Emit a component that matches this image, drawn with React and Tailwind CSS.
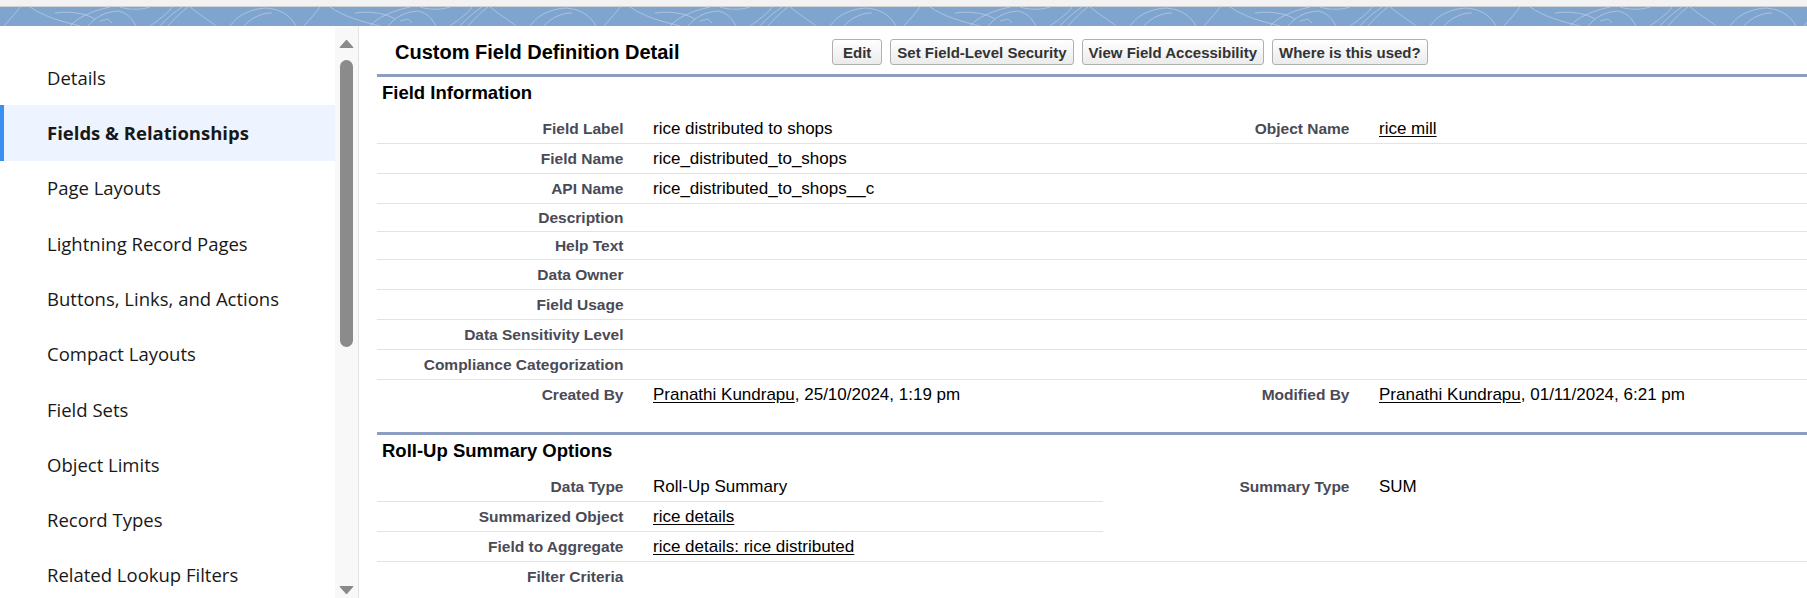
import React from "react";

const navItems = [
  "Details",
  "Fields & Relationships",
  "Page Layouts",
  "Lightning Record Pages",
  "Buttons, Links, and Actions",
  "Compact Layouts",
  "Field Sets",
  "Object Limits",
  "Record Types",
  "Related Lookup Filters",
];

function TopBand() {
  return (
    <div className="flex flex-col">
      <div className="h-[7px] bg-[#f2f2f2] border-b border-[#d2d2d2]" />
      <div className="h-[19px] bg-[#7fa5cf] overflow-hidden">
        <svg width="100%" height="19" xmlns="http://www.w3.org/2000/svg">
          <defs>
            <pattern id="topo" x="0" y="0" width="300" height="19" patternUnits="userSpaceOnUse">
              <g fill="none" stroke="#ffffff" strokeOpacity="0.32" strokeWidth="1">
                <path d="M30 0 C45 10, 60 14, 80 19" />
                <path d="M55 6 C70 4, 85 6, 95 12" />
                <path d="M70 19 C78 10, 92 4, 110 0" />
                <path d="M88 19 C96 10, 104 5, 118 4 C128 6, 132 12, 136 19" />
                <path d="M100 14 L108 12 L112 16" />
                <path d="M150 19 C160 12, 168 6, 172 0" />
                <path d="M160 19 C168 10, 176 4, 182 0" />
                <path d="M168 19 C174 12, 180 6, 188 0" />
                <path d="M190 0 C200 8, 210 14, 216 19" />
                <path d="M230 19 C238 8, 250 2, 266 1 C280 2, 290 8, 296 19" />
                <path d="M244 19 C252 10, 262 6, 272 6" />
                <path d="M4 19 C10 12, 16 6, 20 0" />
                <path d="M120 0 C130 3, 140 3, 150 0" />
              </g>
            </pattern>
          </defs>
          <rect width="100%" height="19" fill="url(#topo)" />
        </svg>
      </div>
    </div>
  );
}

function Sidebar() {
  return (
    <div className="w-[335px] bg-white pt-[24px] shrink-0">
      {navItems.map((item) => {
        const active = item === "Fields & Relationships";
        return (
          <div
            key={item}
            className={
              active
                ? "h-[55.3px] flex items-center pl-[43px] bg-[#eef4ff] border-l-4 border-[#3b8ff0]"
                : "h-[55.3px] flex items-center pl-[47px]"
            }
          >
            <span
              className={
                active
                  ? "text-[18.5px] font-bold text-[#181818]"
                  : "text-[18.5px] text-[#181818]"
              }
              style={{ fontFamily: '"Open Sans", "Noto Sans", sans-serif' }}
            >
              {item}
            </span>
          </div>
        );
      })}
    </div>
  );
}

function ScrollColumn() {
  return (
    <div className="w-[24px] shrink-0 bg-[#f8f8f8] border-r border-[#e2e2e2] flex flex-col items-center pt-[13px] pb-[3px]">
      <svg width="15" height="9" viewBox="0 0 15 9">
        <path d="M7.5 1 L14 8.5 L1 8.5 Z" fill="#8a8a8a" stroke="#8a8a8a" strokeLinejoin="round" />
      </svg>
      <div className="mt-[12px] w-[13px] h-[287px] rounded-full bg-[#8b8b8b]" />
      <div className="flex-1" />
      <svg width="15" height="9" viewBox="0 0 15 9">
        <path d="M1 0.5 L14 0.5 L7.5 8 Z" fill="#8a8a8a" stroke="#8a8a8a" strokeLinejoin="round" />
      </svg>
    </div>
  );
}

function Btn({ children, wide }) {
  return (
    <button
      className={
        (wide ? "px-[10px] " : "px-[6px] ") +
        "h-[26px] rounded-[3px] border border-[#b0b0b0] bg-gradient-to-b from-white to-[#ebebeb] text-[15px] font-bold text-[#333333] leading-none"
      }
    >
      {children}
    </button>
  );
}

function Label({ children, border }) {
  return (
    <div
      className={
        "h-full flex items-center justify-end pr-[10.5px] text-[15.5px] font-bold text-[#4a4a56] " +
        (border ? "border-b border-[#e3e3e3]" : "")
      }
    >
      {children}
    </div>
  );
}

function Value({ children, border }) {
  return (
    <div
      className={
        "h-full flex items-center pl-[19px] text-[17px] text-black whitespace-nowrap " +
        (border ? "border-b border-[#e3e3e3]" : "")
      }
    >
      {children}
    </div>
  );
}

function Row({ h = 30, l1, v1, l2, v2, border = "full" }) {
  const b12 = border === "full" || border === "half";
  const b34 = border === "full";
  return (
    <div
      className="grid grid-cols-[257px_469px_257px_1fr]"
      style={{ height: h }}
    >
      <Label border={b12}>{l1}</Label>
      <Value border={b12}>{v1}</Value>
      <Label border={b34}>{l2}</Label>
      <Value border={b34}>{v2}</Value>
    </div>
  );
}

function Link({ children }) {
  return <span className="underline underline-offset-2">{children}</span>;
}

function SectionHeader({ children }) {
  return (
    <div className="border-t-[3px] border-[#8c9dbf] h-[40px] pl-[5px] pt-[5px]">
      <div className="text-[18.5px] font-bold text-black leading-[22px]">{children}</div>
    </div>
  );
}

export default function App() {
  return (
    <div
      className="w-[1807px] h-[598px] overflow-hidden bg-white"
      style={{ fontFamily: '"Liberation Sans", Arial, sans-serif' }}
    >
      <TopBand />
      <div className="flex h-[572px]">
        <Sidebar />
        <ScrollColumn />
        <div className="flex-1 pl-[18px]">
          <div className="pt-[13px] pb-[9px]">
            <div className="flex items-center h-[26px]">
              <div className="w-[455px] pl-[18px] text-[20px] font-bold text-black">
                Custom Field Definition Detail
              </div>
              <div className="flex gap-[8px]">
                <Btn wide>Edit</Btn>
                <Btn>Set Field-Level Security</Btn>
                <Btn>View Field Accessibility</Btn>
                <Btn>Where is this used?</Btn>
              </div>
            </div>
          </div>
          <SectionHeader>Field Information</SectionHeader>
          <Row l1="Field Label" v1="rice distributed to shops" l2="Object Name" v2={<Link>rice mill</Link>} />
          <Row l1="Field Name" v1="rice_distributed_to_shops" />
          <Row l1="API Name" v1="rice_distributed_to_shops__c" />
          <Row h={28} l1="Description" />
          <Row h={28} l1="Help Text" />
          <Row l1="Data Owner" />
          <Row l1="Field Usage" />
          <Row l1="Data Sensitivity Level" />
          <Row l1="Compliance Categorization" />
          <Row
            border="none"
            l1="Created By"
            v1={<><Link>Pranathi Kundrapu</Link>, 25/10/2024, 1:19 pm</>}
            l2="Modified By"
            v2={<><Link>Pranathi Kundrapu</Link>, 01/11/2024, 6:21 pm</>}
          />
          <div className="h-[22px]" />
          <SectionHeader>Roll-Up Summary Options</SectionHeader>
          <Row border="half" l1="Data Type" v1="Roll-Up Summary" l2="Summary Type" v2="SUM" />
          <Row border="half" l1="Summarized Object" v1={<Link>rice details</Link>} />
          <Row l1="Field to Aggregate" v1={<Link>rice details: rice distributed</Link>} />
          <Row border="none" l1="Filter Criteria" />
        </div>
      </div>
    </div>
  );
}
